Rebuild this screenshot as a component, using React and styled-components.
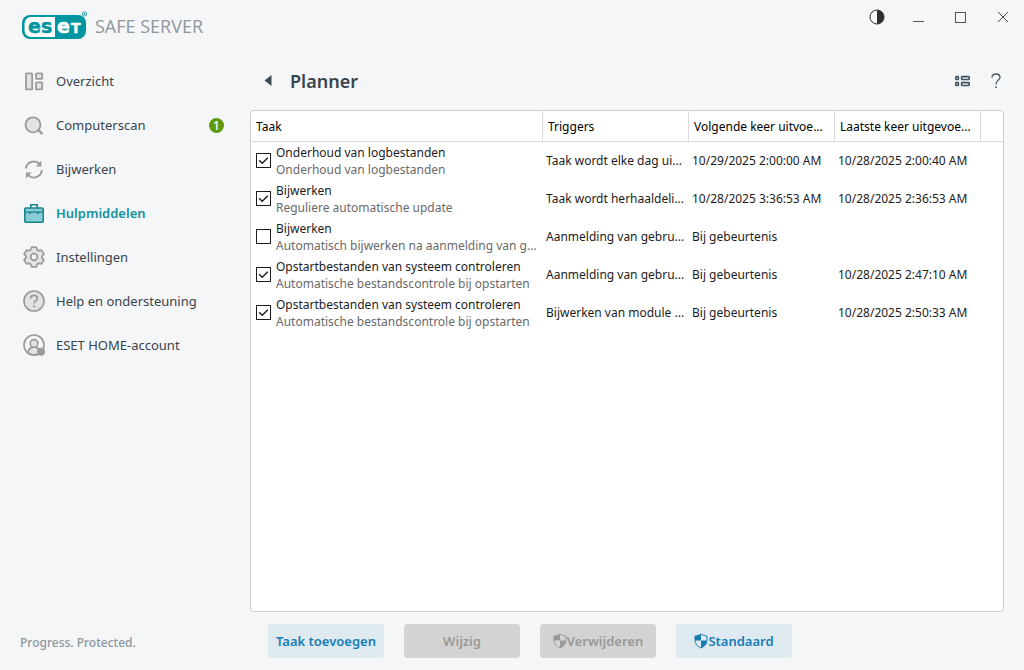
import React, { useState } from "react"
import styled, { createGlobalStyle } from "styled-components"

const GlobalStyle = createGlobalStyle`
  * {
    box-sizing: border-box;
  }
  body {
    margin: 0;
    background: #f4f6f8;
    font-family: "Noto Sans", "Open Sans", sans-serif;
    font-size: 13px;
    color: #3a444c;
  }
  button {
    font-family: inherit;
    border: 0;
    padding: 0;
    background: none;
    color: inherit;
    cursor: pointer;
  }
`

const OverviewIcon = () => (
  <svg width="22" height="22" viewBox="0 0 22 22" fill="#e1e3e4" stroke="#9a9b9c" strokeWidth="1.8">
    <rect x="3" y="3.4" width="6.2" height="16" rx="0.6" />
    <rect x="13" y="3.4" width="6.2" height="5.4" rx="0.6" />
    <rect x="13" y="12.4" width="6.2" height="7" rx="0.6" />
  </svg>
)

const ScanIcon = () => (
  <svg width="22" height="22" viewBox="0 0 22 22" fill="none" stroke="#9a9b9c" strokeWidth="1.8">
    <circle cx="10" cy="10.8" r="7.5" fill="#e1e3e4" />
    <path d="M15.4 16.2l3.4 3.2" strokeWidth="2.4" strokeLinecap="round" />
  </svg>
)

const UpdateIcon = () => (
  <svg width="22" height="22" viewBox="0 0 22 22" fill="none" stroke="#9a9b9c" strokeWidth="1.9">
    <path d="M2.9 10.4A8 8 0 0 1 16.4 5.8" />
    <path d="M18.8 12A8 8 0 0 1 5.4 17.4" />
    <path d="M18.4 2.6v5.8h-5.6z" fill="#9a9b9c" stroke="none" />
    <path d="M3 20.4v-5.8h5.6z" fill="#9a9b9c" stroke="none" />
  </svg>
)

const ToolsIcon = () => (
  <svg width="22" height="22" viewBox="0 0 22 22" fill="none" stroke="#14868f" strokeWidth="1.6">
    <rect x="1.8" y="6" width="18.4" height="14.2" rx="1" fill="#8bcdd5" />
    <path d="M7.8 5.8V2.8h6.4v3" />
    <path d="M2 10h18" strokeWidth="1.3" />
    <path d="M7 10v2M15 10v2" strokeWidth="1.8" />
  </svg>
)

const SettingsIcon = () => (
  <svg width="22" height="22" viewBox="0 0 22 22" fill="#e1e3e4" stroke="#9a9b9c" strokeWidth="1.7" strokeLinejoin="round">
    <path d="M8.6 1.2h4.8l.8 2.6 1.6.9 2.7-.6 2.4 4.1-1.9 2v1.6l1.9 2-2.4 4.1-2.7-.6-1.6.9-.8 2.600H8.600l-.8-2.600-1.600-.9-2.700.6-2.400-4.100 1.900-2v-1.600l-1.900-2 2.400-4.100 2.700.6 1.600-.9z" />
    <circle cx="11" cy="11" r="3.3" fill="#f4f6f8" />
  </svg>
)

const HelpIcon = () => (
  <svg width="22" height="22" viewBox="0 0 22 22" fill="none" stroke="#9a9b9c" strokeWidth="1.7">
    <circle cx="11" cy="11" r="10" fill="#e1e3e4" />
    <path d="M7.6 8.6c0-2 1.5-3.2 3.4-3.2s3.4 1.2 3.4 3c0 2.4-3.4 2.4-3.4 5.2" />
    <path d="M11 15.4v1.8" strokeWidth="2" />
  </svg>
)

const AccountIcon = () => (
  <svg width="22" height="22" viewBox="0 0 22 22" fill="none" stroke="#9a9b9c" strokeWidth="1.7">
    <circle cx="11" cy="11" r="10" />
    <path d="M5 18.8c.4-3.800 2.800-5.600 6-5.600s5.600 1.800 6 5.600c-3.600 2.600-8.400 2.600-12 0z" fill="#e1e3e4" />
    <circle cx="11" cy="9.4" r="3.8" fill="#e1e3e4" />
    <circle cx="18" cy="17.8" r="4" fill="#9a9b9c" stroke="none" />
  </svg>
)

const ShieldIcon = () => (
  <svg width="14" height="16" viewBox="0 0 14 16" fill="currentColor">
    <path
      d="M7 1C5.2 2.2 3 2.9 1 3v4.2c0 3.6 2.3 6.1 6 7.8 3.7-1.7 6-4.2 6-7.8V3C11 2.9 8.8 2.2 7 1z"
      fill="none"
      stroke="currentColor"
    />
    <path d="M7 1C5.2 2.2 3 2.9 1 3v4.6h6z" />
    <path d="M7 7.6h6c-.2 3.4-2.5 5.8-6 7.4z" />
  </svg>
)

const EsetLogo = () => (
  <svg width="66" height="30" viewBox="0 0 66 30" role="img" aria-label="ESET">
    <rect x="0" y="4" width="64" height="24" rx="8" fill="#0096a1" />
    <path d="M9 6h24v20H9a6.500 6.500 0 0 1-6.500-6.500v-7A6.500 6.500 0 0 1 9 6z" fill="#fff" />
    <g fontFamily="DejaVu Sans, sans-serif" fontWeight="700" fontSize="19" strokeWidth="0.5">
      <text x="6" y="21.500" fill="#0096a1" stroke="#0096a1">es</text>
      <text x="35" y="21.500" fill="#fff" stroke="#fff">e</text>
      <text x="49" y="21.500" fontSize="14" fill="#fff" stroke="#fff">T</text>
    </g>
    <circle cx="62.500" cy="2.900" r="2.200" fill="none" stroke="#0096a1" strokeWidth="0.8" />
    <circle cx="62.500" cy="2.900" r="0.900" fill="#0096a1" />
  </svg>
)

const menu = [
  { label: "Overzicht", icon: OverviewIcon },
  { label: "Computerscan", icon: ScanIcon, badge: 1 },
  { label: "Bijwerken", icon: UpdateIcon },
  { label: "Hulpmiddelen", icon: ToolsIcon, active: true },
  { label: "Instellingen", icon: SettingsIcon },
  { label: "Help en ondersteuning", icon: HelpIcon },
  { label: "ESET HOME-account", icon: AccountIcon },
]

const initialTasks = [
  {
    name: "Onderhoud van logbestanden",
    detail: "Onderhoud van logbestanden",
    trigger: "Taak wordt elke dag ui...",
    next: "10/29/2025 2:00:00 AM",
    last: "10/28/2025 2:00:40 AM",
    enabled: true,
  },
  {
    name: "Bijwerken",
    detail: "Reguliere automatische update",
    trigger: "Taak wordt herhaaldeli...",
    next: "10/28/2025 3:36:53 AM",
    last: "10/28/2025 2:36:53 AM",
    enabled: true,
  },
  {
    name: "Bijwerken",
    detail: "Automatisch bijwerken na aanmelding van g...",
    trigger: "Aanmelding van gebru...",
    next: "Bij gebeurtenis",
    last: "",
    enabled: false,
  },
  {
    name: "Opstartbestanden van systeem controleren",
    detail: "Automatische bestandscontrole bij opstarten",
    trigger: "Aanmelding van gebru...",
    next: "Bij gebeurtenis",
    last: "10/28/2025 2:47:10 AM",
    enabled: true,
  },
  {
    name: "Opstartbestanden van systeem controleren",
    detail: "Automatische bestandscontrole bij opstarten",
    trigger: "Bijwerken van module ...",
    next: "Bij gebeurtenis",
    last: "10/28/2025 2:50:33 AM",
    enabled: true,
  },
]

const App = () => {
  const [tasks, setTasks] = useState(initialTasks)

  const toggle = (index) =>
    setTasks(tasks.map((t, i) => (i === index ? { ...t, enabled: !t.enabled } : t)))

  return (
    <Window>
      <GlobalStyle />
      <Sidebar>
        <Brand>
          <EsetLogo />
          <Product>SAFE SERVER</Product>
        </Brand>
        <Nav>
          {menu.map(({ label, icon: Icon, badge, active }) => (
            <NavLink key={label} href="#" $active={active}>
              <Icon />
              <span>{label}</span>
              {badge && <Badge>{badge}</Badge>}
            </NavLink>
          ))}
        </Nav>
        <Tagline>Progress. Protected.</Tagline>
      </Sidebar>

      <Main>
        <WindowControls>
          <ControlButton aria-label="Contrast">
            <svg width="16" height="16" viewBox="0 0 16 16">
              <circle cx="8" cy="8" r="7" fill="none" stroke="#2e2e2e" />
              <path d="M8 1a7 7 0 0 1 0 14z" fill="#2e2e2e" />
            </svg>
          </ControlButton>
          <ControlButton aria-label="Minimaliseren">
            <svg width="12" height="12" viewBox="0 0 12 12" stroke="#555">
              <path d="M0 10.5h11" />
            </svg>
          </ControlButton>
          <ControlButton aria-label="Maximaliseren">
            <svg width="12" height="12" viewBox="0 0 12 12" fill="none" stroke="#555">
              <rect x="0.5" y="1.5" width="10" height="10" />
            </svg>
          </ControlButton>
          <ControlButton aria-label="Sluiten">
            <svg width="12" height="12" viewBox="0 0 12 12" stroke="#444">
              <path d="M1 1l10 10M11 1L1 11" />
            </svg>
          </ControlButton>
        </WindowControls>

        <TitleBar>
          <BackButton aria-label="Terug">
            <svg width="8" height="12" viewBox="0 0 8 12">
              <path d="M7.5 0v11L.5 5.5z" fill="#3f4b54" />
            </svg>
          </BackButton>
          <Title>Planner</Title>
          <ActionButton aria-label="Weergave">
            <svg width="16" height="12" viewBox="0 0 16 12" fill="none" stroke="#465460" strokeWidth="1.6">
              <rect x="1.8" y="1.6" width="2.6" height="2.9" rx="0.6" />
              <rect x="7.6" y="1.6" width="7.6" height="2.9" rx="0.6" />
              <rect x="1.8" y="7.6" width="2.6" height="2.9" rx="0.6" />
              <rect x="7.6" y="7.6" width="7.6" height="2.9" rx="0.6" />
            </svg>
          </ActionButton>
          <ActionButton aria-label="Help">
            <svg width="10" height="16" viewBox="0 0 10 16" fill="none" stroke="#465460" strokeWidth="1.3">
              <path d="M1 4.4C1 2.2 2.7 1 5 1s4 1.2 4 3.2C9 7.2 5 7.2 5 11.4" />
              <path d="M5 13.4v1.6" strokeWidth="1.6" />
            </svg>
          </ActionButton>
        </TitleBar>

        <Panel>
          <Table>
            <colgroup>
              <Column />
              <Column $width={146} />
              <Column $width={146} />
              <Column $width={146} />
              <Column $width={22} />
            </colgroup>
            <thead>
              <tr>
                <HeadCell>Taak</HeadCell>
                <HeadCell>Triggers</HeadCell>
                <HeadCell>Volgende keer uitvoe...</HeadCell>
                <HeadCell>Laatste keer uitgevoe...</HeadCell>
                <HeadCell />
              </tr>
            </thead>
            <tbody>
              {tasks.map((task, i) => (
                <tr key={i}>
                  <Cell>
                    <Task>
                      <CheckWrap>
                        <Checkbox
                          type="checkbox"
                          checked={task.enabled}
                          onChange={() => toggle(i)}
                        />
                        <Tick width="15" height="15" viewBox="0 0 15 15">
                          <path d="M3.2 7.3l3 3 5.6-5.6" />
                        </Tick>
                      </CheckWrap>
                      <TaskText>
                        <span>{task.name}</span>
                        <Detail>{task.detail}</Detail>
                      </TaskText>
                    </Task>
                  </Cell>
                  <Cell>{task.trigger}</Cell>
                  <Cell>{task.next}</Cell>
                  <Cell>{task.last}</Cell>
                  <Cell />
                </tr>
              ))}
            </tbody>
          </Table>
        </Panel>

        <Actions>
          <Button>Taak toevoegen</Button>
          <Button disabled>Wijzig</Button>
          <Button disabled>
            <ShieldIcon />
            Verwijderen
          </Button>
          <Button>
            <ShieldIcon />
            Standaard
          </Button>
        </Actions>
      </Main>
    </Window>
  )
}

export default App

const Window = styled.div`
  display: grid;
  grid-template-columns: 250px minmax(0, 1fr);
  min-height: 100vh;
`

const Sidebar = styled.aside`
  display: flex;
  flex-direction: column;
`

const Brand = styled.div`
  display: flex;
  align-items: center;
  gap: 7px;
  height: 59px;
  padding: 0 0 7px 22px;
`

const Product = styled.span`
  font-family: "Open Sans", sans-serif;
  font-size: 18px;
  line-height: 24px;
  color: #8d969c;
  white-space: nowrap;
`

const Nav = styled.nav`
  display: flex;
  flex-direction: column;
`

const NavLink = styled.a`
  display: flex;
  align-items: center;
  gap: 11px;
  height: 44px;
  padding: 0 26px 0 23px;
  font-size: 13px;
  font-weight: ${(props) => (props.$active ? 600 : 400)};
  color: ${(props) => (props.$active ? "#14929b" : "#3a444c")};
  text-decoration: none;
`

const Badge = styled.span`
  display: flex;
  align-items: center;
  justify-content: center;
  width: 15px;
  height: 15px;
  margin-left: auto;
  border-radius: 50%;
  background: #5f9a0e;
  color: #fff;
  font-size: 12px;
  font-weight: 500;
`

const Tagline = styled.div`
  margin-top: auto;
  padding: 0 20px 18px;
  font-size: 12px;
  font-weight: 500;
  line-height: 18px;
  color: #8d969c;
`

const Main = styled.main`
  display: flex;
  flex-direction: column;
`

const WindowControls = styled.div`
  display: flex;
  justify-content: flex-end;
  height: 34px;
`

const ControlButton = styled.button`
  display: flex;
  align-items: center;
  justify-content: center;
  width: 42px;
`

const TitleBar = styled.header`
  display: flex;
  align-items: center;
  height: 58px;
  margin-top: 18px;
  padding: 0 11px 0 6px;
`

const BackButton = styled.button`
  display: flex;
  align-items: center;
  justify-content: center;
  width: 24px;
  height: 24px;
`

const Title = styled.h1`
  flex: 1;
  margin: 0;
  padding-left: 10px;
  font-size: 18px;
  font-weight: 600;
  line-height: 26px;
  color: #3a444c;
`

const ActionButton = styled.button`
  display: flex;
  align-items: center;
  justify-content: center;
  width: 34px;
  height: 34px;
`

const Panel = styled.section`
  flex: 1;
  margin-right: 20px;
  border: 1px solid #cdd0d2;
  border-radius: 4px;
  background: #fff;
  overflow: hidden;
`

const Table = styled.table`
  width: 100%;
  table-layout: fixed;
  border-collapse: separate;
  border-spacing: 0;
  color: #1c1c1c;
`

const Column = styled.col`
  width: ${(props) => (props.$width ? `${props.$width}px` : "auto")};
`

const HeadCell = styled.th`
  height: 31px;
  padding: 0 0 0 5px;
  border-bottom: 1px solid #d8dadb;
  border-right: 1px solid #d8dadb;
  font-size: 12px;
  font-weight: 400;
  text-align: left;
  white-space: nowrap;
  color: #000;
  &:last-child {
    border-right: 0;
  }
`

const Cell = styled.td`
  height: 38px;
  padding: 0 0 2px 3px;
  font-size: 12px;
  white-space: nowrap;
`

const Task = styled.label`
  display: flex;
  align-items: center;
  gap: 5px;
  padding-left: 2px;
`

const CheckWrap = styled.span`
  display: grid;
  flex: none;
`

const Checkbox = styled.input`
  grid-area: 1 / 1;
  appearance: none;
  width: 15px;
  height: 15px;
  margin: 0;
  border: 1px solid #1c1c1c;
  background: #fff;
`

const Tick = styled.svg`
  grid-area: 1 / 1;
  fill: none;
  stroke: #1c1c1c;
  stroke-width: 1.4;
  pointer-events: none;
  visibility: hidden;
  ${Checkbox}:checked + & {
    visibility: visible;
  }
`

const TaskText = styled.span`
  display: flex;
  flex-direction: column;
  padding-top: 2px;
  line-height: 17px;
`

const Detail = styled.span`
  color: #6a6a6a;
`

const Actions = styled.footer`
  display: flex;
  gap: 20px;
  padding: 12px 18px;
`

const Button = styled.button`
  display: flex;
  align-items: center;
  justify-content: center;
  width: 116px;
  height: 34px;
  border-radius: 4px;
  background: #dfeaf0;
  color: #167db5;
  font-size: 13px;
  font-weight: 600;
  white-space: nowrap;
  &:disabled {
    background: #d3d3d3;
    color: #999;
    cursor: default;
  }
`
